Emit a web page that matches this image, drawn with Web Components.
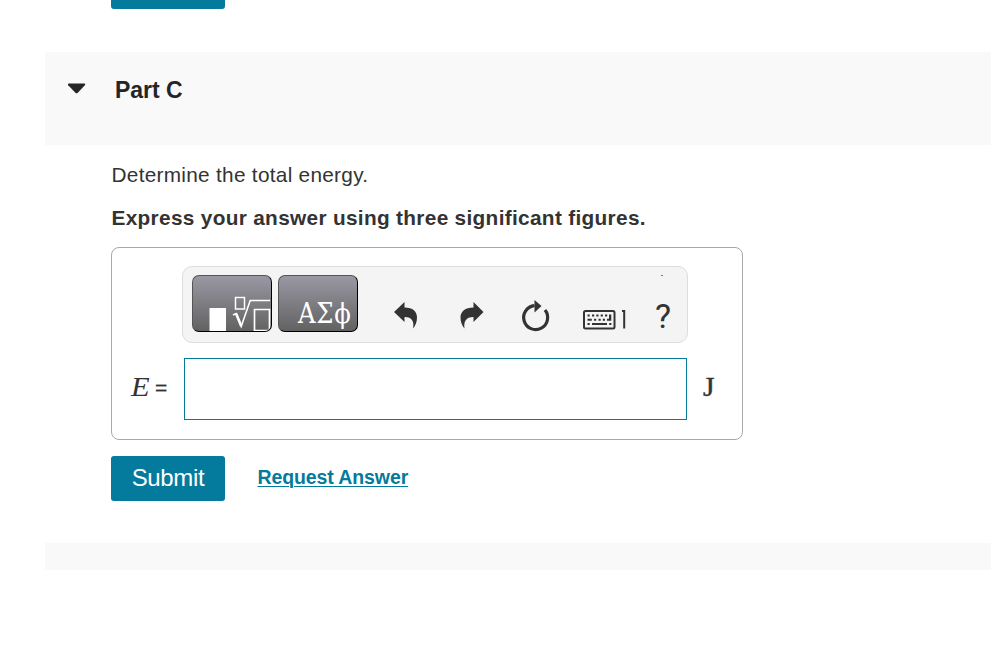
<!DOCTYPE html>
<html lang="en">
<head>
<meta charset="utf-8">
<title>Part C</title>
<style>
    body {
        margin: 0;
        background: #fff;
        color: #333;
        font-family: "Liberation Sans", Arial, sans-serif;
    }
</style>
</head>
<body>
<problem-page></problem-page>

<script>
class SubmitButton extends HTMLElement {
    constructor() {
        super();
        this.attachShadow({ mode: 'open' });
    }

    connectedCallback() {
        this.shadowRoot.innerHTML = `
            <style>
                :host { display: block; width: 114px; height: 45px; }
                button {
                    display: block;
                    width: 100%;
                    height: 100%;
                    padding: 0 0 2px;
                    border: 0;
                    border-radius: 3px;
                    background: #047a9c;
                    color: #fff;
                    font: 24px/43px "Liberation Sans", Arial, sans-serif;
                    letter-spacing: -0.35px;
                }
            </style>
            <button type="button"><slot></slot></button>
        `;
    }
}

class PartHeader extends HTMLElement {
    constructor() {
        super();
        this.attachShadow({ mode: 'open' });
    }

    connectedCallback() {
        this.shadowRoot.innerHTML = `
            <style>
                :host {
                    display: flex;
                    align-items: flex-start;
                    box-sizing: border-box;
                    height: 93px;
                    padding: 24px 0 0 23px;
                    background: #f9f9f9;
                    color: #252525;
                }
                svg { display: block; margin-top: 7px; }
                h2 {
                    margin: 0 0 0 29px;
                    font-size: 23px;
                    line-height: 28px;
                    letter-spacing: -0.05px;
                }
            </style>
            <svg width="18" height="12" viewBox="0 0 18 12">
                <path d="M.8 .6H16.4Q17.8 1 16.8 2.2L9.8 9.8Q8.600 10.900 7.400 9.800L.2 2.200Q-.5 1 .8 .600Z" fill="#252525"/>
            </svg>
            <h2><slot></slot></h2>
        `;
    }
}

class MathToolbar extends HTMLElement {
    constructor() {
        super();
        this.attachShadow({ mode: 'open' });
    }

    connectedCallback() {
        this.shadowRoot.innerHTML = `
            <style>
                :host {
                    display: flex;
                    align-items: flex-start;
                    box-sizing: border-box;
                    width: 506px;
                    height: 77px;
                    padding: 8px 9px;
                    border: 1px solid #ddd;
                    border-radius: 10px;
                    background: #f4f4f4;
                }
                .palette {
                    box-sizing: border-box;
                    width: 80px;
                    height: 57px;
                    margin-right: 6px;
                    border: 1px solid #000;
                    border-top-color: #555;
                    border-left-color: #555;
                    border-radius: 7px;
                    background: linear-gradient(#9a98a3, #626262);
                    overflow: hidden;
                    color: #fff;
                }
                .greek {
                    padding: 23px 0 0 19px;
                    font: 27px/30px "DejaVu Serif Condensed", "DejaVu Serif", serif;
                    font-stretch: condensed;
                    letter-spacing: 0.8px;
                    white-space: nowrap;
                }
                svg { display: block; }
                .help {
                    margin: 23px 0 0 9px;
                    font: 34px/36px Roboto, sans-serif;
                }
            </style>
            <div class="palette">
                <svg width="78" height="55" viewBox="193 276 78 55" fill="none" stroke="#fff">
                    <path d="M209.500 308H226V331H209.500Z" fill="#fff" stroke="none"/>
                    <path d="M235.500 297.500H244.500V309H235.500Z" stroke-width="1.500"/>
                    <path d="M233 315L236.200 313.500L241.200 326.500L250.200 300.500H270" stroke-width="1.600"/>
                    <path d="M236.200 313.800L241.200 326" stroke-width="2.600"/>
                    <path d="M254.500 309.500H269.500V330.500H254.500Z" stroke-width="1.700"/>
                </svg>
            </div>
            <div class="palette greek">ΑΣϕ</div>
            <svg width="282" height="58" viewBox="364 275 282 58" fill="#333">
                <path d="M394 312L404.500 302V307.500C413 307.500 417 311.500 417 317.500C417 322 415.500 325.500 413 328.500C414.500 321.500 412 317 404.500 317V322Z"/>
                <path d="M483.500 312L473.500 302V307.500C465 307.500 460.500 311.500 460.500 317.500C460.500 322 462 325.500 464.500 328.500C463.500 321.500 466 317 473.500 317V322Z"/>
                <path d="M534.500 305.600A12 12 0 1 0 545 310" fill="none" stroke="#333" stroke-width="3.200"/>
                <path d="M534.500 300L541.500 306L534.500 312.500Z"/>
                <rect x="584" y="311" width="30.500" height="17.500" rx="1.500" fill="none" stroke="#333" stroke-width="2"/>
                <path d="M587.500 314.500h2.200v2h-2.200zM592 314.500h2.200v2h-2.200zM596.300 314.500h2.200v2h-2.200zM600.700 314.500h2.200v2h-2.200zM605 314.500h2.200v2h-2.200z"/>
                <path d="M609 314.500h2.300v6.200h-4.300v-2h2zM587.500 318.700h4.300v2h-4.300zM594 318.700h2.200v2h-2.200zM598.500 318.700h2.200v2h-2.200zM602.800 318.700h2.200v2h-2.200z"/>
                <path d="M587.500 323h2.200v2h-2.200zM592 323h15v2h-15zM609.200 323h2.200v2h-2.200z"/>
                <path d="M622 311H624.200V328.500" fill="none" stroke="#333" stroke-width="2"/>
            </svg>
            <div class="help">?</div>
        `;
    }
}

class AnswerBox extends HTMLElement {
    constructor() {
        super();
        this.attachShadow({ mode: 'open' });
    }

    connectedCallback() {
        const name = this.getAttribute('name') || '';
        const unit = this.getAttribute('unit') || '';

        this.shadowRoot.innerHTML = `
            <style>
                :host {
                    display: block;
                    position: relative;
                    box-sizing: border-box;
                    width: 632px;
                    height: 193px;
                    padding: 18px 0 0;
                    border: 1px solid #a9a9a9;
                    border-radius: 8px;
                }
                math-toolbar { margin-left: 70px; }
                .speck {
                    position: absolute;
                    left: 549px;
                    top: 27px;
                    width: 2px;
                    height: 1px;
                    background: #777;
                }
                .row {
                    display: flex;
                    align-items: center;
                    height: 62px;
                    margin-top: 15px;
                }
                .label {
                    display: flex;
                    align-items: baseline;
                    box-sizing: border-box;
                    width: 72px;
                    padding: 0 0 4px 19px;
                    font-size: 21px;
                }
                .label i, .unit {
                    font-family: "Liberation Serif", "Times New Roman", serif;
                    font-size: 27px;
                    line-height: 32px;
                }
                .label i { display: inline-block; width: 24px; transform: scaleX(1.13); transform-origin: left; }
                .label span { margin-bottom: 1px; -webkit-text-stroke: 0.3px; transform: translateY(-1px); }
                input {
                    box-sizing: border-box;
                    width: 503px;
                    height: 62px;
                    margin: 0;
                    border: 1px solid #047a9c;
                    border-radius: 0;
                    background: #fff;
                    outline: 0;
                }
                .unit { margin: 0 0 4px 16px; -webkit-text-stroke: 0.4px; transform: scaleX(1.1); transform-origin: left; }
            </style>
            <math-toolbar></math-toolbar>
            <span class="speck"></span>
            <div class="row">
                <div class="label"><i>${name}</i><span>=</span></div>
                <input type="text" aria-label="${name}">
                <span class="unit">${unit}</span>
            </div>
        `;
    }
}

class ProblemPage extends HTMLElement {
    constructor() {
        super();
        this.attachShadow({ mode: 'open' });
    }

    connectedCallback() {
        this.shadowRoot.innerHTML = `
            <style>
                :host { display: block; height: 645px; overflow: hidden; }
                .previous { margin: -36px 0 43px 111px; }
                part-header, .next { margin-left: 45px; }
                main { margin-left: 111px; }
                p { margin: 0; font-size: 20.8px; line-height: 24px; white-space: nowrap; }
                .question { padding: 18px 0 0 0.5px; letter-spacing: 0.28px; }
                .hint { padding: 19px 0 0 0.5px; font-weight: bold; letter-spacing: 0.32px; }
                answer-box { margin-top: 17px; }
                .actions { display: flex; align-items: center; margin-top: 16px; }
                a {
                    margin: 0 0 3px 32.5px;
                    color: #047a9c;
                    font-size: 19.5px;
                    font-weight: bold;
                    line-height: 24px;
                    text-decoration: underline;
                    text-decoration-thickness: 1px;
                    text-underline-offset: 2px;
                    letter-spacing: -0.1px;
                }
                .next { height: 27px; margin-top: 42px; background: #f9f9f9; }
            </style>
            <submit-button class="previous"></submit-button>
            <part-header>Part C</part-header>
            <main>
                <p class="question">Determine the total energy.</p>
                <p class="hint">Express your answer using three significant figures.</p>
                <answer-box name="E" unit="J"></answer-box>
                <div class="actions">
                    <submit-button>Submit</submit-button>
                    <a href="#">Request Answer</a>
                </div>
            </main>
            <div class="next"></div>
        `;
    }
}

customElements.define('submit-button', SubmitButton);
customElements.define('part-header', PartHeader);
customElements.define('math-toolbar', MathToolbar);
customElements.define('answer-box', AnswerBox);
customElements.define('problem-page', ProblemPage);
</script>
</body>
</html>
